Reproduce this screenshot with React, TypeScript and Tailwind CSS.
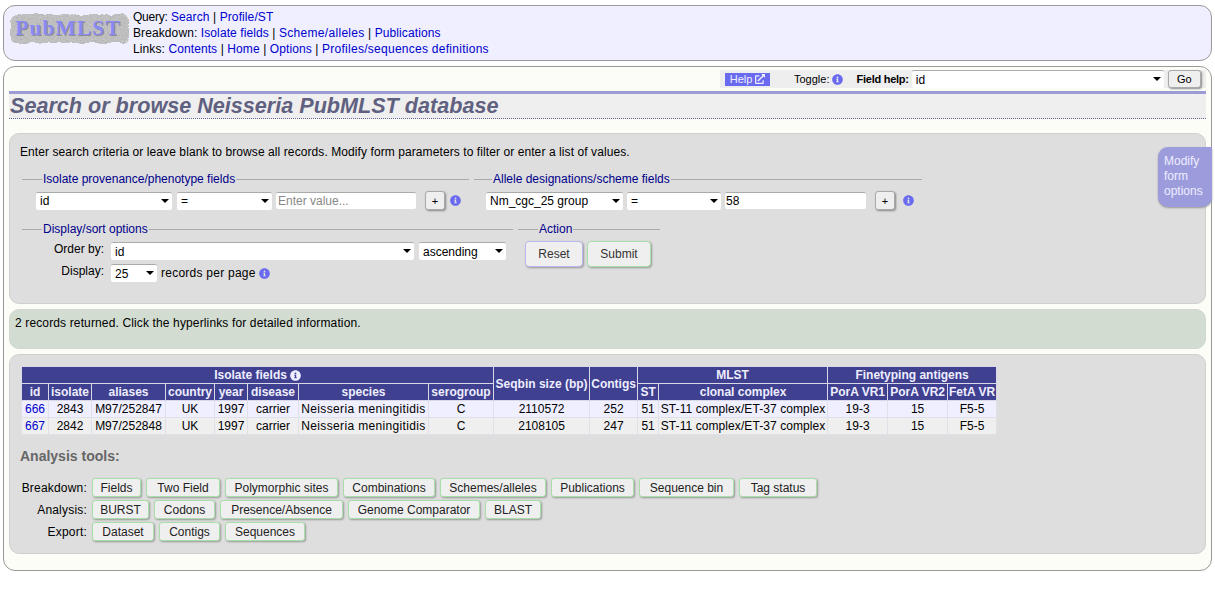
import React from 'react';
import { FaInfoCircle, FaExternalLinkAlt } from 'react-icons/fa';

const Info = ({ className = '' }: { className?: string }) => (
  <FaInfoCircle size={11} className={`shrink-0 text-[#6a6af0] ${className}`} />
);

const Logo = () => (
  <svg width="120" height="36" viewBox="0 0 120 36" className="mb-[6px] shrink-0">
    <defs>
      <filter id="rough" x="-5%" y="-10%" width="110%" height="120%">
        <feTurbulence type="fractalNoise" baseFrequency="0.09" numOctaves="3" seed="4" result="n" />
        <feDisplacementMap in="SourceGraphic" in2="n" scale="5" result="d" />
        <feTurbulence type="fractalNoise" baseFrequency="0.7" numOctaves="2" seed="8" result="g" />
        <feColorMatrix in="g" type="matrix" values="0 0 0 0 0.4 0 0 0 0 0.4 0 0 0 0 0.4 0 0 0 1.6 -0.6" result="s" />
        <feComposite in="s" in2="d" operator="in" result="sp" />
        <feMerge>
          <feMergeNode in="d" />
          <feMergeNode in="sp" />
        </feMerge>
      </filter>
    </defs>
    <rect x="1" y="2" width="118" height="29" rx="6" fill="#c4c4c4" filter="url(#rough)" />
    <text x="60" y="24" textAnchor="middle" fontFamily="'Liberation Serif', serif" fontWeight="700" fontSize="21.5" letterSpacing="1.1" fill="#5a5a70" opacity="0.5">PubMLST</text>
    <text x="59" y="23" textAnchor="middle" fontFamily="'Liberation Serif', serif" fontWeight="700" fontSize="21.5" letterSpacing="1.1" fill="#8a8af4">PubMLST</text>
  </svg>
);

const A = ({ children, className = '' }: { children: React.ReactNode; className?: string }) => (
  <a href="#" className={`text-[#0000cc] ${className}`}>{children}</a>
);

const Sel = ({ value, w }: { value: string; w: string }) => (
  <div className={`relative h-[18px] shrink-0 ${w}`}>
    <select
      defaultValue={value}
      className="h-full w-full appearance-none rounded-[2px] border-t border-t-[#aaa] bg-white pl-[4px] text-[12px] leading-[16px] text-black outline-none"
    >
      <option>{value}</option>
    </select>
    <span className="pointer-events-none absolute right-[3px] top-[7px] h-0 w-0 border-x-[4px] border-t-[4px] border-x-transparent border-t-black" />
  </div>
);

const Plus = () => (
  <button className="flex h-[19px] w-[20px] shrink-0 items-center justify-center rounded-[3px] border border-[#aaa] bg-[#efefef] text-[11px] shadow-[1px_1px_2px_#888]">+</button>
);

const Group = ({ title, className, legend = 'ml-[20px]', children }: { title: string; className: string; legend?: string; children: React.ReactNode }) => (
  <fieldset className={`border-t border-[#aaa] ${className}`}>
    <legend className={`px-[1px] text-[12px] leading-[14px] text-[#00008b] ${legend}`}>{title}</legend>
    {children}
  </fieldset>
);

const widths = [27, 43, 74, 49, 33, 51, 130, 65, 96, 48, 21, 169, 60, 60, 49];

const rows = [
  ['666', '2843', 'M97/252847', 'UK', '1997', 'carrier', 'Neisseria meningitidis', 'C', '2110572', '252', '51', 'ST-11 complex/ET-37 complex', '19-3', '15', 'F5-5'],
  ['667', '2842', 'M97/252848', 'UK', '1997', 'carrier', 'Neisseria meningitidis', 'C', '2108105', '247', '51', 'ST-11 complex/ET-37 complex', '19-3', '15', 'F5-5'],
];

const th = 'border border-[#d8d8e8] bg-[#404090] p-0 text-center font-bold text-[#eeeeff]';

const tools = [
  {
    label: 'Breakdown:',
    items: [
      ['Fields', 'w-[49px]'],
      ['Two Field', 'w-[74px]'],
      ['Polymorphic sites', 'w-[113px]'],
      ['Combinations', 'w-[92px]'],
      ['Schemes/alleles', 'w-[106px]'],
      ['Publications', 'w-[83px]'],
      ['Sequence bin', 'w-[95px]'],
      ['Tag status', 'w-[78px]'],
    ],
  },
  {
    label: 'Analysis:',
    items: [
      ['BURST', 'w-[57px]'],
      ['Codons', 'w-[61px]'],
      ['Presence/Absence', 'w-[123px]'],
      ['Genome Comparator', 'w-[132px]'],
      ['BLAST', 'w-[56px]'],
    ],
  },
  {
    label: 'Export:',
    items: [
      ['Dataset', 'w-[62px]'],
      ['Contigs', 'w-[61px]'],
      ['Sequences', 'w-[80px]'],
    ],
  },
];

export default function App() {
  return (
    <div className="relative h-[594px] overflow-hidden bg-white px-[3px] pt-[5px] font-['Liberation_Sans',Arial,sans-serif] text-[12px] leading-[16px] text-black">
      {/* Menu */}
      <div className="flex h-[56px] items-center rounded-[12px] border border-[#999] bg-[#efefff] pl-[5px]">
        <Logo />
        <div className="ml-[4px] tracking-[0.1px]">
          <div><span className="tracking-[-0.25px]">Query:</span> <A>Search</A> | <A>Profile/ST</A></div>
          <div>Breakdown: <A>Isolate fields</A> | <A className="tracking-[0.3px]">Scheme/alleles</A> | <A>Publications</A></div>
          <div>Links: <A>Contents</A> | <A>Home</A> | <A>Options</A> | <A className="tracking-[0.27px]">Profiles/sequences definitions</A></div>
        </div>
      </div>

      {/* Main */}
      <div className="mt-[5px] h-[505px] rounded-[12px] border border-[#999] bg-[#fdfdf8] px-[5px] pt-[3px]">
        <div className="ml-auto flex h-[18px] w-[486px] items-center bg-[#eeeeee] pl-[5px] text-[11px]">
          <span className="flex h-[13px] w-[45px] items-center justify-center gap-[3px] bg-[#6a6af0] text-[#eeeeff]">
            Help <FaExternalLinkAlt size={10} />
          </span>
          <span className="ml-[24px]">Toggle:</span>
          <Info className="ml-[3px]" />
          <span className="ml-[13px] font-bold tracking-[-0.25px]">Field help:</span>
          <Sel value="id" w="w-[252px] ml-[3px]" />
          <button className="ml-[4px] h-[18px] w-[33px] rounded-[3px] border border-[#aaa] bg-[#efefef] shadow-[1px_1px_2px_#888]">Go</button>
        </div>

        <div className="mt-[3px] h-[28px] border-t-[3px] border-b border-t-[#9c9cd4] border-b-[#66669a] bg-[#efefef] [border-bottom-style:dotted]">
          <h1 className="ml-[1px] text-[21.6px] font-bold italic leading-[24px] text-[#606080]">Search or browse Neisseria PubMLST database</h1>
        </div>

        {/* Search form */}
        <div className="mt-[14px] h-[171px] rounded-[10px] border border-[#d0d0d0] bg-[#dedede] pl-[12px] pt-[10px]">
          <p className="ml-[-2px] tracking-[0.085px]">Enter search criteria or leave blank to browse all records. Modify form parameters to filter or enter a list of values.</p>
          <div className="mt-[12px] flex gap-[5px]">
            <Group title="Isolate provenance/phenotype fields" className="h-[44px] w-[447px]">
              <div className="mt-[5px] flex items-center pl-[14px]">
                <Sel value="id" w="w-[136px]" />
                <Sel value="=" w="w-[95px] ml-[5px]" />
                <input placeholder="Enter value..." className="ml-[4px] h-[17px] w-[140px] rounded-[2px] border-t border-t-[#aaa] bg-white pl-[2px] text-[12px] outline-none placeholder:text-[#888]" />
                <span className="ml-[9px]"><Plus /></span>
                <Info className="ml-[5px]" />
              </div>
            </Group>
            <Group title="Allele designations/scheme fields" className="h-[44px] w-[448px]" legend="ml-[18px]">
              <div className="mt-[5px] flex items-center pl-[12px]">
                <Sel value="Nm_cgc_25 group" w="w-[137px]" />
                <Sel value="=" w="w-[94px] ml-[4px]" />
                <input defaultValue="58" className="ml-[4px] h-[17px] w-[141px] rounded-[2px] border-t border-t-[#aaa] bg-white pl-[1px] text-[12px] outline-none" />
                <span className="ml-[9px]"><Plus /></span>
                <Info className="ml-[8px]" />
              </div>
            </Group>
          </div>
          <div className="mt-[6px] flex gap-[5px]">
            <Group title="Display/sort options" className="w-[491px]">
              <div className="mt-[6px] flex items-center">
                <span className="mt-[-4px] w-[82px] text-right">Order by:</span>
                <Sel value="id" w="w-[303px] ml-[7px]" />
                <Sel value="ascending" w="w-[87px] ml-[5px]" />
              </div>
              <div className="mt-[4px] flex items-center">
                <span className="mt-[-4px] w-[82px] text-right">Display:</span>
                <Sel value="25" w="w-[46px] ml-[7px]" />
                <span className="ml-[4px] tracking-[0.25px]">records per page</span>
                <Info className="ml-[3px]" />
              </div>
            </Group>
            <Group title="Action" className="w-[142px]">
              <div className="mt-[5px] flex gap-[4px] pl-[7px]">
                <button className="h-[26px] w-[58px] rounded-[4px] border border-[#b8b8ee] bg-[#efefef] text-[#333] shadow-[1px_1px_2px_#999]">Reset</button>
                <button className="h-[26px] w-[64px] rounded-[4px] border border-[#a8dfa8] bg-[#efefef] text-[#333] shadow-[1px_1px_2px_#999]">Submit</button>
              </div>
            </Group>
          </div>
        </div>

        {/* Result message */}
        <div className="mt-[5px] h-[40px] rounded-[10px] border border-[#d0d8d0] bg-[#d2dcd0] pl-[5px] pt-[5px] tracking-[0.135px]">
          2 records returned. Click the hyperlinks for detailed information.
        </div>

        {/* Results */}
        <div className="mt-[5px] h-[200px] rounded-[10px] border border-[#d0d0d0] bg-[#dedede] pl-[11px] pt-[11px]">
          <table className="w-[975px] table-fixed border-collapse text-[12px] leading-[16px]">
            <colgroup>
              {widths.map((w, i) => <col key={i} style={{ width: w }} />)}
            </colgroup>
            <thead>
              <tr>
                <th colSpan={8} className={th}>
                  <span className="inline-flex items-center gap-[3px]">Isolate fields <FaInfoCircle size={11} /></span>
                </th>
                <th rowSpan={2} className={th}>Seqbin size (bp)</th>
                <th rowSpan={2} className={th}>Contigs</th>
                <th colSpan={2} className={th}>MLST</th>
                <th colSpan={3} className={th}>Finetyping antigens</th>
              </tr>
              <tr>
                {['id', 'isolate', 'aliases', 'country', 'year', 'disease', 'species', 'serogroup'].map((h) => (
                  <th key={h} className={th}>{h}</th>
                ))}
                {['ST', 'clonal complex', 'PorA VR1', 'PorA VR2', 'FetA VR'].map((h) => (
                  <th key={h} className={th}>{h}</th>
                ))}
              </tr>
            </thead>
            <tbody>
              {rows.map((r, i) => (
                <tr key={r[0]} className={i === 0 ? 'bg-[#efefff]' : 'bg-[#efefef]'}>
                  {r.map((c, j) => (
                    <td
                      key={j}
                      className={`whitespace-nowrap border border-[#e0e0e8] p-0 text-center ${j === 6 ? 'tracking-[0.35px]' : j === 11 ? 'tracking-[0.08px]' : ''}`}
                    >
                      {j === 0 ? <A>{c}</A> : c}
                    </td>
                  ))}
                </tr>
              ))}
            </tbody>
          </table>

          <h2 className="ml-[-1px] mt-[12px] text-[14px] font-bold leading-[18px] text-[#666]">Analysis tools:</h2>

          <div className="mt-[13px] flex flex-col gap-[3px]">
            {tools.map((t) => (
              <div key={t.label} className="flex items-center gap-[5px]">
                <span className="w-[66px] text-right tracking-[0.2px]">{t.label}</span>
                <div className="flex gap-[5px]">
                  {t.items.map(([b, w]) => (
                    <button
                      key={b}
                      className={`h-[19px] rounded-[3px] border border-[#a8dfa8] bg-[#efefef] text-[12px] leading-[16px] text-[#222] shadow-[1px_1px_2px_#999] ${w}`}
                    >
                      {b}
                    </button>
                  ))}
                </div>
              </div>
            ))}
          </div>
        </div>
      </div>

      {/* Modify form tab */}
      <div className="absolute right-[3px] top-[147px] h-[60px] w-[54px] rounded-l-[10px] rounded-br-[10px] bg-[#9c9cdc] pl-[6px] pt-[7px] text-[12px] leading-[15px] text-[#eeeeff] shadow-[0_1px_2px_#999]">
        Modify form options
      </div>
    </div>
  );
}
